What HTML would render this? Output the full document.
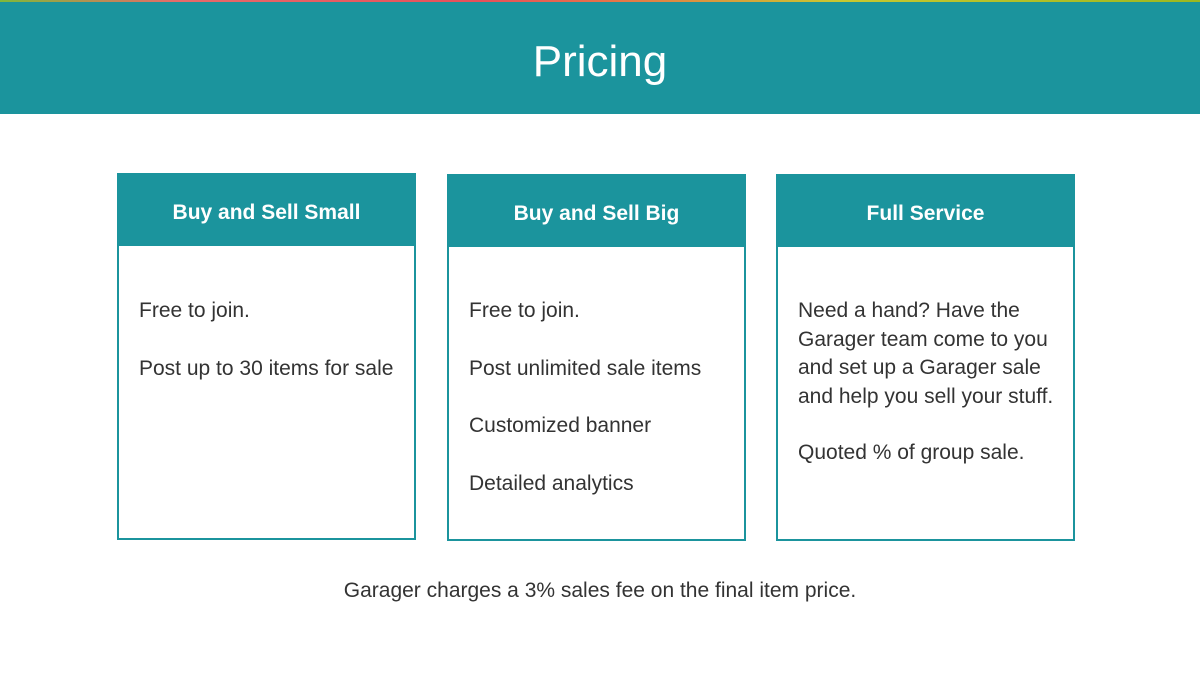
<!DOCTYPE html>
<html><head><style>
body{margin:0;width:1200px;height:687px;background:#fff;font-family:"Liberation Sans",sans-serif;position:relative;overflow:hidden}
.top{position:absolute;left:0;top:0;width:1200px;height:2px;background:linear-gradient(90deg,#7fb83a 0%,#e86a6a 15%,#e8505a 40%,#e8704a 50%,#c8c830 70%,#9cb820 100%)}
.hdr{position:absolute;left:0;top:2px;width:1200px;height:112px;background:#1b949d;color:#fff;text-align:center;font-size:44px;line-height:120px}
.card{position:absolute;top:173px;width:295px;height:365px;border:2px solid #1b949d;border-top:0}
.card h2{margin:0;height:73px;background:#1b949d;color:#fff;font-size:21px;font-weight:bold;text-align:center;line-height:80px;margin:0 -2px}
.card p{margin:0;position:absolute;left:20px;color:#333;font-size:21px;width:270px}
.foot{position:absolute;top:579px;width:1200px;text-align:center;color:#333;font-size:21px}
</style></head><body>
<div class="top"></div>
<div class="hdr">Pricing</div>
<div class="card" style="left:117px"><h2>Buy and Sell Small</h2>
<p style="top:126px">Free to join.</p><p style="top:184px">Post up to 30 items for sale</p></div>
<div class="card" style="left:447px;top:174px"><h2>Buy and Sell Big</h2>
<p style="top:125px">Free to join.</p><p style="top:183px">Post unlimited sale items</p><p style="top:240px">Customized banner</p><p style="top:298px">Detailed analytics</p></div>
<div class="card" style="left:776px;top:174px"><h2>Full Service</h2>
<p style="top:123px;line-height:28.7px">Need a hand? Have the Garager team come to you and set up a Garager sale and help you sell your stuff.</p><p style="top:267px">Quoted % of group sale.</p></div>
<div class="foot">Garager charges a 3% sales fee on the final item price.</div>
</body></html>
